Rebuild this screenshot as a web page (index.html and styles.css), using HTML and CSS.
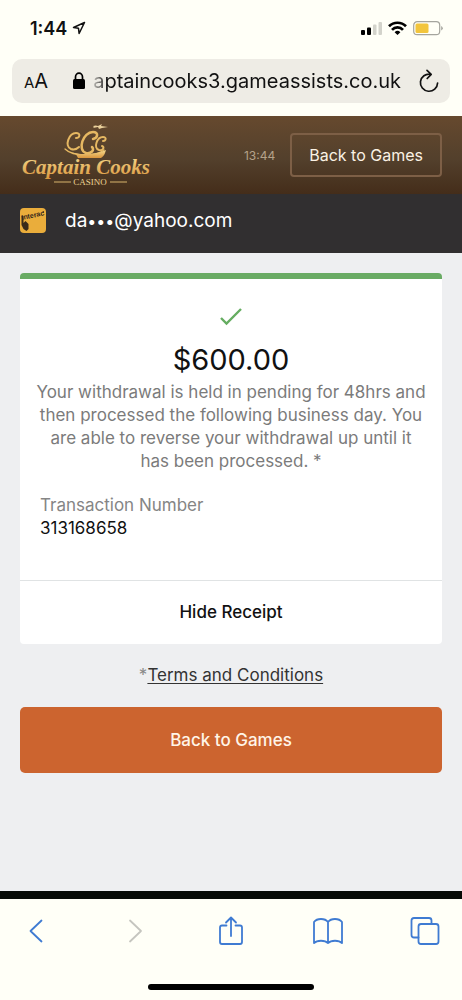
FILE: index.html
```html
<!DOCTYPE html>
<html lang="en">
<head>
<meta charset="utf-8">
<meta name="viewport" content="width=device-width, initial-scale=1">
<title>Captain Cooks Casino</title>
<link rel="stylesheet" href="styles.css">
</head>
<body>
<div class="page">
  <div class="status">
    <span class="clock">1:44</span>
    <svg class="locate" width="14" height="14" viewBox="0 0 14 14"><path d="M12.500 1.500 1.500 6.500l5 .8.6 5.200z" fill="none" stroke="#111" stroke-width="1.500" stroke-linejoin="round"/></svg>
    <svg class="signals" width="84" height="16" viewBox="0 0 84 16">
      <g><rect x="1" y="10" width="4" height="5" rx="1"/><rect x="7" y="7.500" width="4" height="7.500" rx="1"/><rect x="13" y="4.500" width="3.500" height="10.500" rx="1" fill="#d3d3cb"/><rect x="18.500" y="2" width="3.500" height="13" rx="1" fill="#d3d3cb"/></g>
      <g fill="none" stroke="#000" stroke-width="2.700"><path d="M29 6.300a12 12 0 0 1 17 0"/><path d="M32 9.800a7.500 7.500 0 0 1 11 0"/></g>
      <path d="M34.600 12.200a4.200 4.200 0 0 1 5.800 0L37.500 15z"/>
      <rect x="53.700" y="1.700" width="26" height="13" rx="3.500" fill="none" stroke="#a5a59e" stroke-width="1.200"/>
      <rect x="55.500" y="3.500" width="13" height="9.500" rx="1.500" fill="#f2c53d"/>
      <path d="M81.200 6v4.500q1.600-.7 1.600-2.200T81.200 6z" fill="#a5a59e"/>
    </svg>
  </div>

  <div class="address">
    <button class="plain text-size" aria-label="Text size"><span class="small-a">A</span><span class="big-a">A</span></button>
    <svg class="lock" width="12" height="18" viewBox="0 0 12 18"><rect y="7" width="12" height="10" rx="1.500"/><path d="M2.500 8V5a3.500 3.800 0 0 1 7 0v3" fill="none" stroke="#000" stroke-width="1.700"/></svg>
    <input class="url" type="text" aria-label="Address" value="aptaincooks3.gameassists.co.uk" readonly>
    <button class="plain reload" aria-label="Reload"><svg width="22" height="24" viewBox="0 0 22 24" fill="none" stroke="#111" stroke-width="1.700" stroke-linecap="round" stroke-linejoin="round"><path d="M12.500 5.200A8.600 8.600 0 1 0 19.600 14M9 1.400l4.200 3.900L9.200 9.500"/></svg></button>
  </div>

  <header class="brand">
    <svg class="logo" width="132" height="66" viewBox="0 0 132 66" role="img" aria-label="Captain Cooks Casino">
      <defs><linearGradient id="gold" x1="0" y1="0" x2="0" y2="1"><stop offset="0" stop-color="#f6dc8e"/><stop offset="1" stop-color="#d9953d"/></linearGradient></defs>
      <g fill="none" stroke="#e6b862" stroke-linecap="round">
        <path d="M56 16c4 0 5-5 0-5-7 0-12 13-5 16 3 1 6 0 8-2" stroke-width="2"/>
        <path d="M73 17c5-1 6-7 0-7-10 0-16 18-7 21 5 1 9-3 6-6" stroke-width="2.500"/>
        <path d="M83 19c3 0 4-4 0-4-6 0-10 11-4 13 4 1 6-3 3-4" stroke-width="2"/>
        <path d="M45 27c5 5 12 6 21 6 8 0 14-2 18-5" stroke-width="1.300"/>
      </g>
      <path d="M50 30c10 3 25 3 36-2-1 3-1 5-5 8H58c-1-3-3-5-8-6z" fill="url(#gold)"/>
      <path d="M73 4q3-1 5 0l4-2-1 2 7 1-6 1-3 1-1-2-5 1 1-1z" fill="#ead09b"/>
      <text class="logo-script" x="66" y="52" text-anchor="middle" fill="url(#gold)">Captain Cooks</text>
      <text class="logo-small" x="70" y="63" text-anchor="middle" fill="#ecd392">CASINO</text>
      <path d="M34 60h17M90 60h17" stroke="#d9b46c"/>
    </svg>
    <time class="time">13:44</time>
    <button class="header-button">Back to Games</button>
  </header>

  <div class="account">
    <svg width="26" height="26" viewBox="0 0 26 26" role="img" aria-label="Interac">
      <rect width="26" height="25" rx="4" fill="#eaad3b"/>
      <path d="M1.500 8h2v7l2-2 3 3v5l-2 2-3-2-2-4z" fill="#3a2a19"/>
      <text class="interac-text" x="2" y="12" transform="rotate(-12 2 12)" fill="#33271b">Interac</text>
      <path d="m22 4 2-1v2z" fill="#33271b"/>
    </svg>
    <span>da<span class="dots">•••</span>@yahoo.com</span>
  </div>

  <main class="content">
    <section class="card">
      <div class="receipt">
        <svg class="check" width="24" height="20" viewBox="0 0 24 20"><path d="m2 11 5.500 5.500L22 2" fill="none" stroke="#65ad61" stroke-width="2.400"/></svg>
        <h1 class="amount">$600.00</h1>
        <p class="message">Your withdrawal is held in pending for 48hrs and then processed the following business day. You are able to reverse your withdrawal up until it has been processed. *</p>
        <dl class="transaction"><dt>Transaction Number</dt><dd>313168658</dd></dl>
      </div>
      <button class="hide">Hide Receipt</button>
    </section>
    <p class="terms">*<a href="#">Terms and Conditions</a></p>
    <button class="primary">Back to Games</button>
  </main>

  <footer class="browser">
    <nav class="tools">
      <button class="plain" aria-label="Back"><svg width="30" height="30" viewBox="0 0 30 30"><path d="M19.500 4.500 8.500 15l11 10.500"/></svg></button>
      <button class="plain" aria-label="Forward" disabled><svg width="30" height="30" viewBox="0 0 30 30"><path d="m11 4.500 11 10.500-11 10.500"/></svg></button>
      <button class="plain" aria-label="Share"><svg width="30" height="30" viewBox="0 0 30 30"><path d="M10.500 9.500H6q-2 0-2 2V26q0 2 2 2h18q2 0 2-2V11.500q0-2-2-2h-4.500M15 20V1.500M10 6.500l5-5 5 5"/></svg></button>
      <button class="plain" aria-label="Bookmarks"><svg width="30" height="30" viewBox="0 0 30 30"><path d="M15 6C12 2 4 2 1 6v21c3-3 11-3 14 0 3-3 11-3 14 0V6c-3-4-11-4-14 0v21"/></svg></button>
      <button class="plain" aria-label="Tabs"><svg width="30" height="30" viewBox="0 0 30 30"><path d="M8.500 21.500H4q-2.500 0-2.500-2.500V4.500Q1.500 2 4 2h15q2.500 0 2.500 2.500V8"/><rect x="8.500" y="8" width="20" height="20" rx="2.500"/></svg></button>
    </nav>
    <div class="home"></div>
  </footer>
</div>
</body>
</html>
```
FILE: styles.css
```css
* { box-sizing: border-box; }
body { margin: 0; font-family: Inter, "Liberation Sans", sans-serif; color: #111; background: #fffff7; }
button { font: inherit; color: inherit; cursor: pointer; }
svg { display: block; flex: none; }
.page { min-height: 100vh; display: flex; flex-direction: column; }
.plain { border: 0; background: none; padding: 0; }

.status { height: 59px; padding: 0 18px 3px 30px; display: flex; align-items: center; gap: 5px; }
.clock { font-size: 18px; font-weight: 600; }
.signals { margin-left: auto; }

.address { height: 44px; margin: 0 12px 13px; padding: 0 10px 0 12px; display: flex; align-items: center; border-radius: 10px; background: #eeece5; }
.text-size { display: flex; align-items: baseline; }
.small-a { font-size: 15px; }
.big-a { font-size: 20px; }
.lock { margin: 0 8px 0 25px; }
.url { flex: 1; min-width: 0; padding: 0; border: 0; outline: 0; background: none; color: #111; font: 20px Inter, sans-serif; mask-image: linear-gradient(to right, rgba(0, 0, 0, .2), #000 14px); }

.brand { height: 78px; padding: 0 20px; display: flex; align-items: center; background: linear-gradient(#66492e, #53402c 55%, #442d1a); }
.logo { overflow: visible; }
.logo-script { font: italic bold 21px "Liberation Serif", serif; }
.logo-small { font: 9px "Liberation Serif", serif; }
.time { margin-left: auto; margin-right: 15px; font-size: 12px; color: #b5a28a; }
.header-button { height: 44px; padding: 0 17px; border: 2px solid #7d5f46; border-radius: 4px; background: none; color: #fbf2e4; font-size: 16px; }

.account { height: 59px; padding: 0 20px 6px; display: flex; align-items: center; gap: 19px; background: #312f30; color: #fff; font-size: 19px; }
.dots { font-size: 16px; }
.interac-text { font: bold 7px "Liberation Sans", sans-serif; }

.content { flex: 1; padding: 20px; background: #eeeff1; font-size: 17px; line-height: 23px; }
.card { overflow: hidden; border-top: 6px solid #69ab64; border-radius: 4px; background: #fff; }
.receipt { padding: 28px 16px 40px; }
.check { margin: 0 auto; }
.amount { margin: 16px 0 4px; font-size: 29px; line-height: 34px; font-weight: 400; text-align: center; }
.message { margin: 0 0 21px; color: #7b7b7b; text-align: center; }
.transaction { margin: 0 4px; }
.transaction dt { color: #858585; }
.transaction dd { margin: 0; }
.hide { display: block; width: 100%; height: 64px; border: 0; border-top: 1px solid #e0e3e4; background: none; font-weight: 500; }
.terms { margin: 20px 0; text-align: center; color: #888; }
.terms a { color: #333; text-underline-offset: 2px; }
.primary { display: block; width: 100%; height: 66px; border: 0; border-radius: 5px; background: #cc642f; color: #fff5e8; font-weight: 500; }

.browser { border-top: 8px solid #060a06; background: #fffff7; }
.tools { padding: 17px 22px 38px; display: flex; justify-content: space-between; }
.tools svg { fill: none; stroke: #3f7bd2; stroke-width: 1.800px; stroke-linejoin: round; stroke-linecap: round; }
.tools button:disabled svg { stroke: #c5c5bf; }
.home { width: 36%; height: 6px; margin: 0 auto 10px; border-radius: 3px; background: #000; }
```
